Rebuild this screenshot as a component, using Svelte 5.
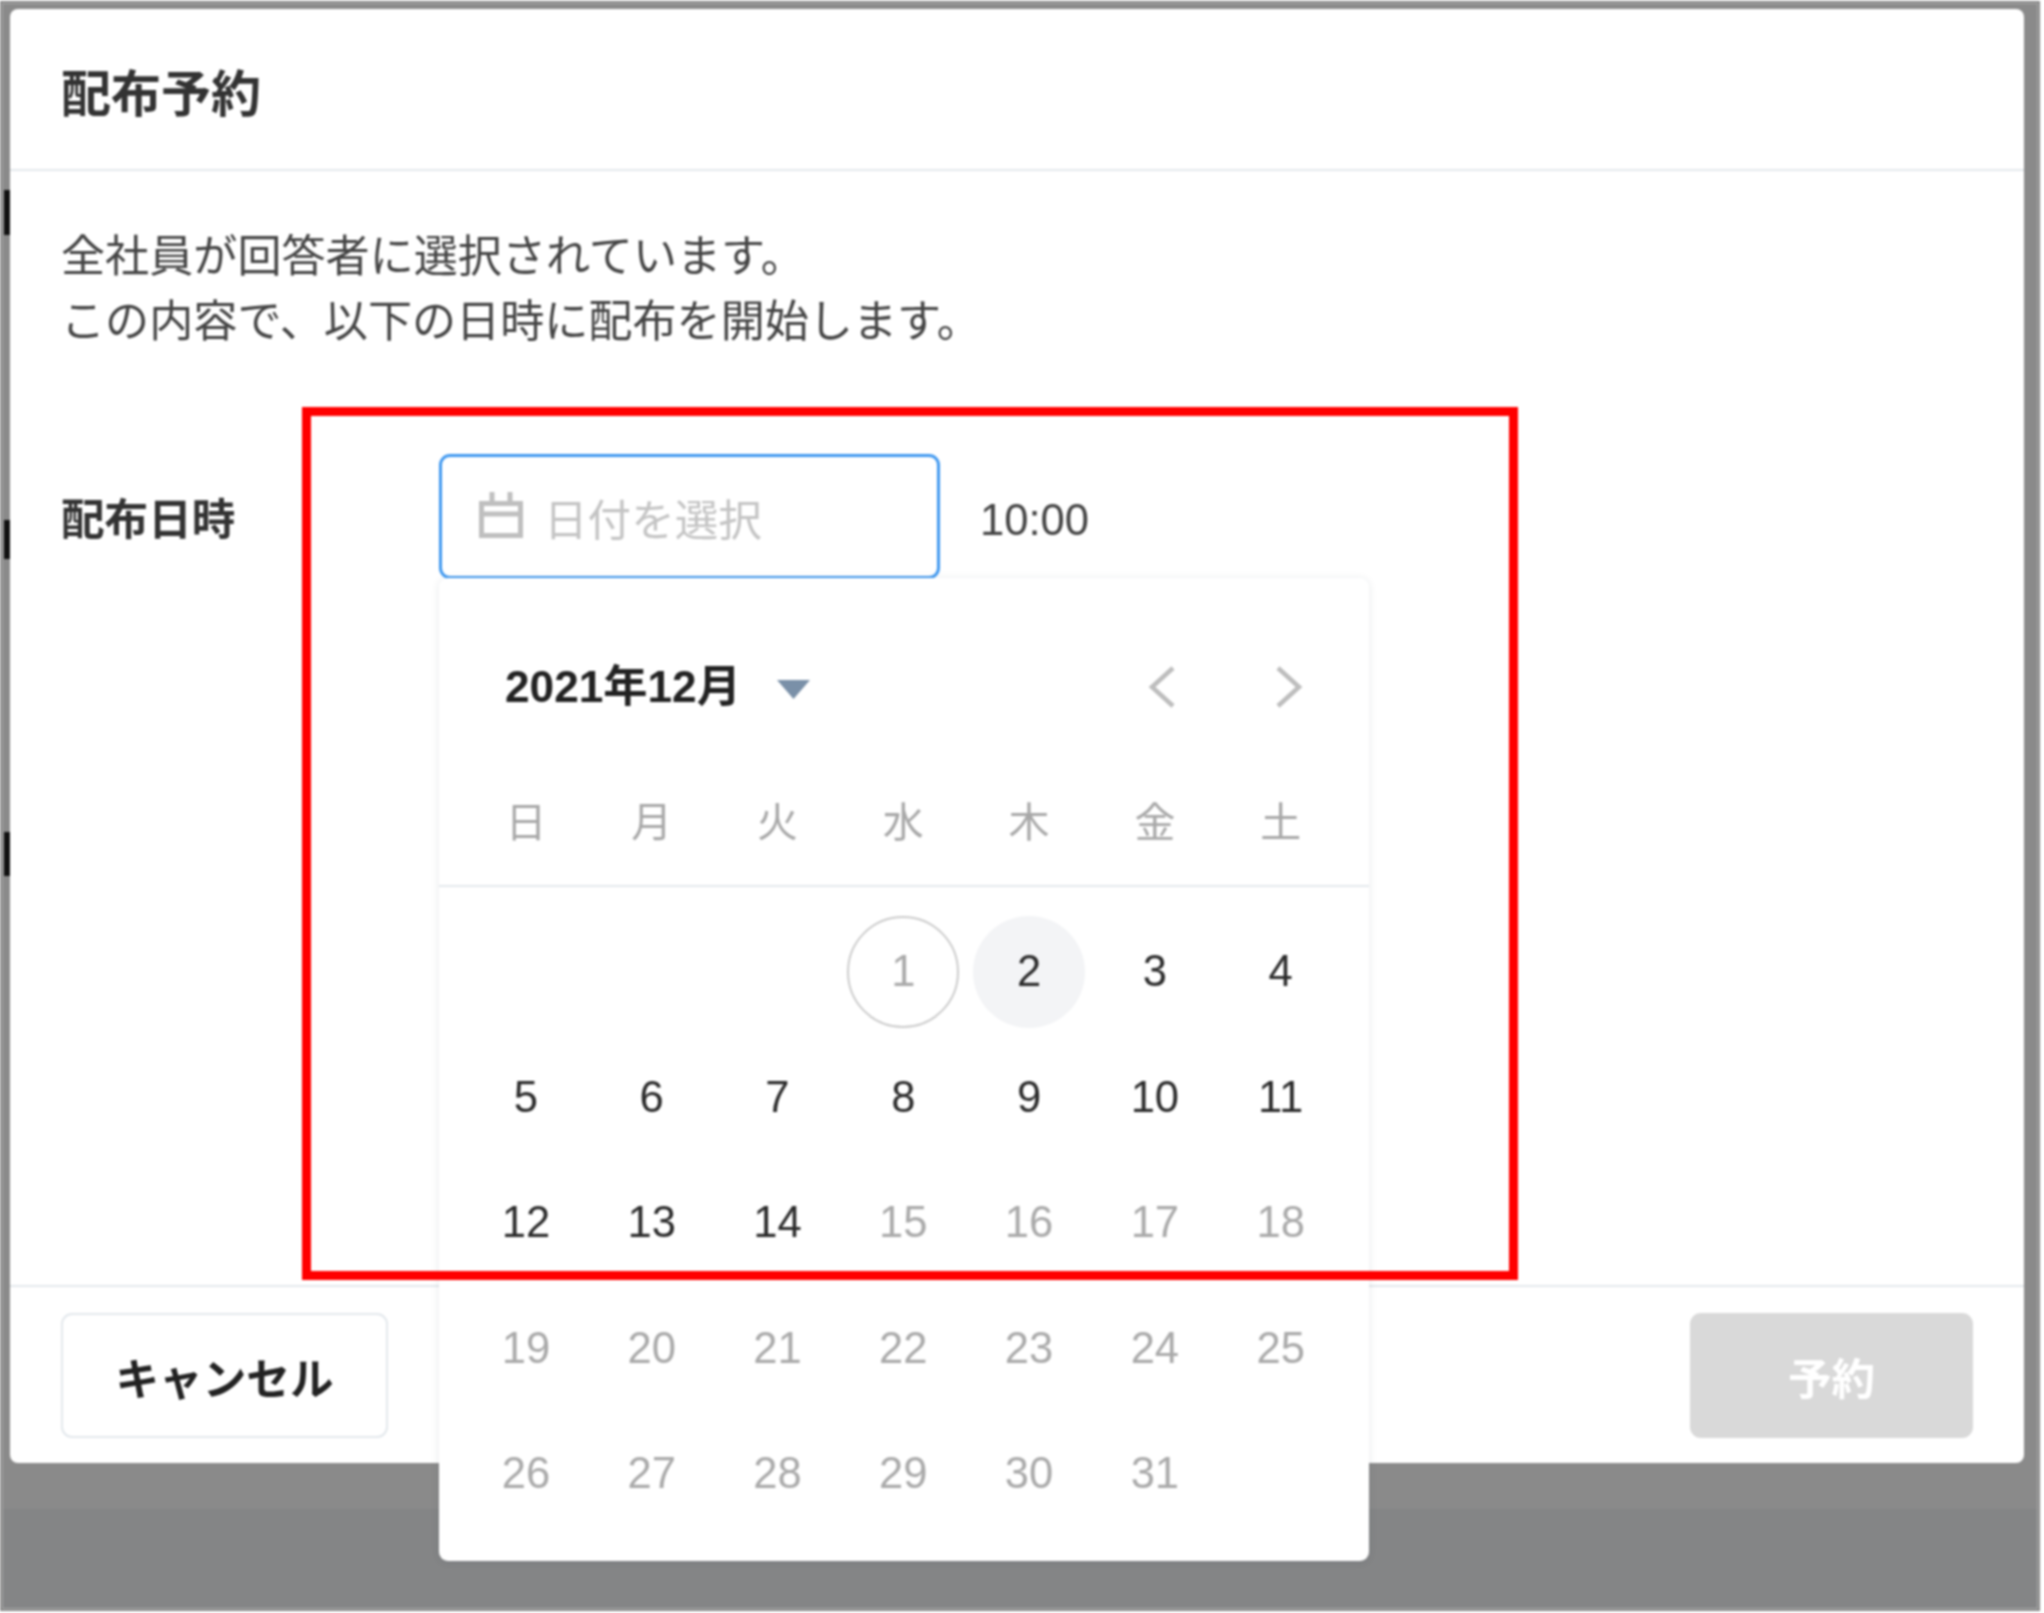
<script>
  const weekdays = ['日', '月', '火', '水', '木', '金', '土'];
  const blanks = [0, 1, 2];
  const days = Array.from({ length: 31 }, (_, i) => i + 1);
  const marks = [
    { top: 189, height: 45 },
    { top: 519, height: 39 },
    { top: 831, height: 44 }
  ];
  function dayClass(d) {
    if (d === 1) return 'day today';
    if (d === 2) return 'day hover';
    return d < 15 ? 'day active' : 'day muted';
  }
</script>

<div class="frame">
  <div class="screen">
    {#each marks as m}
      <i class="behind" style="top:{m.top}px;height:{m.height}px"></i>
    {/each}
    <section class="modal">
      <header class="head"><h1>配布予約</h1></header>
      <div class="body">
        <p>全社員が回答者に選択されています。<br />この内容で、以下の日時に配布を開始します。</p>
        <div class="field">
          <span class="label">配布日時</span>
          <div class="picker">
            <div class="input">
              <svg class="cal" viewBox="0 0 44 46" width="44" height="46" fill="none" stroke="#bfbfbf" stroke-width="5">
                <rect x="2.5" y="11.5" width="39" height="32" />
                <path d="M3 22H41M13 0V10M31 0V10" />
              </svg>
              <span class="placeholder">日付を選択</span>
            </div>
            <div class="popup">
              <div class="month">
                <strong>2021年12月</strong>
                <svg class="caret" viewBox="0 0 33 19" width="33" height="19"><path d="M0 0H33L16.5 19Z" fill="#7a90a8" /></svg>
                <svg class="chev first" viewBox="0 0 30 42" width="30" height="42" fill="none" stroke="#bdbdbd" stroke-width="4.5"><path d="M26 2L5 21L26 40" /></svg>
                <svg class="chev" viewBox="0 0 30 42" width="30" height="42" fill="none" stroke="#bdbdbd" stroke-width="4.5"><path d="M4 2L25 21L4 40" /></svg>
              </div>
              <div class="week">
                {#each weekdays as w}<span>{w}</span>{/each}
              </div>
              <div class="dates">
                {#each blanks as b}<span class="blank" data-b={b}></span>{/each}
                {#each days as d}<span class={dayClass(d)}>{d}</span>{/each}
              </div>
            </div>
          </div>
          <span class="time">10:00</span>
        </div>
      </div>
      <footer class="foot">
        <button class="cancel">キャンセル</button>
        <button class="reserve">予約</button>
      </footer>
    </section>
    <div class="redbox"></div>
  </div>
</div>

<style>
  :global(body) {
    margin: 0;
    background: #fff;
  }
  .frame {
    width: 2044px;
    height: 1613px;
    box-sizing: border-box;
    padding: 1px 4px 2px 0;
    font-family: "Liberation Sans", "Noto Sans CJK JP", sans-serif;
    font-size: 43.6px;
    color: #333;
    filter: blur(0.8px);
    overflow: hidden;
  }
  .screen {
    position: relative;
    height: 100%;
    box-sizing: border-box;
    padding: 8px 0 0 10px;
    background: linear-gradient(#8a8a8a 0, #8a8a8a 1508px, #848586 1508px);
    box-shadow: inset 0 0 0 2px #888, inset 0 0 0 3px #a8a8a8;
  }
  .behind {
    position: absolute;
    left: 4px;
    width: 6px;
    background: #111;
  }
  .modal {
    width: 2014px;
    height: 1454px;
    background: #fff;
    border-radius: 8px;
    display: flex;
    flex-direction: column;
  }
  .head {
    height: 162px;
    box-sizing: border-box;
    border-bottom: 2px solid #e3e8ec;
    padding: 2px 51px 0;
    display: flex;
    align-items: center;
  }
  h1 {
    margin: 0;
    font-size: 50px;
    font-weight: 700;
    color: #333;
  }
  .body {
    flex: 1;
    padding: 53px 51px 0;
    min-height: 0;
  }
  p {
    margin: 0;
    line-height: 65px;
    font-size: 44.1px;
    color: #444;
  }
  .field {
    display: flex;
    align-items: flex-start;
    margin-top: 100px;
    height: 125px;
  }
  .label {
    width: 378px;
    font-weight: 700;
    color: #333;
    line-height: 133px;
  }
  .picker {
    position: relative;
    width: 501px;
    height: 125px;
  }
  .input {
    height: 100%;
    box-sizing: border-box;
    border: 3px solid #3f98f0;
    border-radius: 11px;
    display: flex;
    align-items: center;
    padding-left: 37px;
    gap: 21px;
  }
  .cal {
    margin-top: -4px;
  }
  .popup {
    position: absolute;
    left: 0;
    top: 124px;
    width: 930px;
    height: 983px;
    background: #fff;
    border-radius: 9px;
    box-shadow: 0 1px 8px rgba(30, 50, 70, 0.1);
    z-index: 2;
  }
  .placeholder {
    color: #c4c4c4;
  }
  .month {
    height: 214px;
    box-sizing: border-box;
    padding: 0 66px 0 66px;
    display: flex;
    align-items: center;
    color: #222;
  }
  .month strong {
    font-weight: 700;
    font-size: 44.2px;
    margin-top: -4px;
  }
  .caret {
    margin-left: 36px;
    margin-top: 8px;
  }
  .chev {
    margin-top: 4px;
    margin-right: -1px;
  }
  .chev.first {
    margin-left: auto;
    margin-right: 97px;
  }
  .week {
    height: 95px;
    box-sizing: border-box;
    border-bottom: 2px solid #e3e8ec;
    padding: 0 23px 0 24px;
    display: grid;
    grid-template-columns: repeat(7, 125.8px);
    justify-items: center;
    align-items: start;
    line-height: 62px;
    color: #a8a8a8;
    font-size: 41px;
  }
  .dates {
    padding: 22px 23px 0 24px;
    display: grid;
    grid-template-columns: repeat(7, 125.8px);
    grid-auto-rows: 125.5px;
    justify-items: center;
    align-items: center;
  }
  .day {
    width: 112px;
    height: 112px;
    box-sizing: border-box;
    border-radius: 50%;
    display: flex;
    align-items: center;
    justify-content: center;
  }
  .active,
  .hover {
    color: #2b2b2b;
  }
  .muted {
    color: #aaa;
  }
  .hover {
    background: #f3f4f6;
  }
  .today {
    border: 2px solid #ccc;
    color: #aaa;
  }
  .time {
    margin-left: 40px;
    line-height: 132px;
    color: #444;
  }
  .foot {
    height: 178px;
    box-sizing: border-box;
    border-top: 2px solid #e3e8ec;
    padding: 26px 51px 25px 51px;
    display: flex;
    justify-content: space-between;
  }
  button {
    font: inherit;
    font-weight: 700;
    border-radius: 11px;
    padding: 0;
  }
  .cancel {
    width: 327px;
    background: #fff;
    color: #222;
    border: 2px solid #e3e8ec;
  }
  .reserve {
    width: 283px;
    background: #d9d9d9;
    color: #fff;
    border: 0;
  }
  .redbox {
    position: absolute;
    left: 302px;
    top: 406px;
    width: 1216px;
    height: 873px;
    box-sizing: border-box;
    border: 9.5px solid #f00;
    z-index: 3;
  }
</style>
